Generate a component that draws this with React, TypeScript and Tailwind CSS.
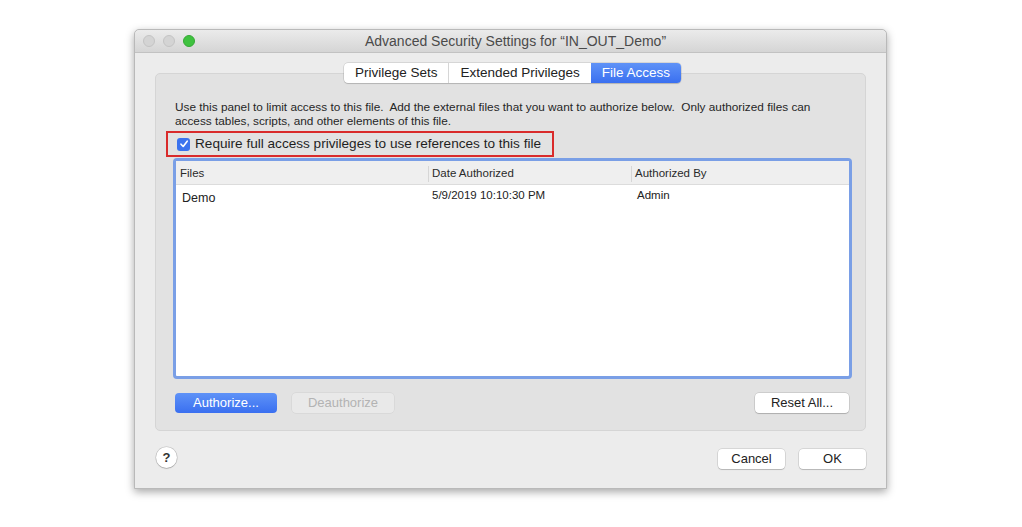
import React from 'react';

const font = { fontFamily: '"Liberation Sans", Arial, sans-serif' };

const Tab = ({ label, active = false, last = false }: { label: string; active?: boolean; last?: boolean }) => (
  <div
    className={`h-[20px] px-[11px] flex items-center text-[13.5px] leading-none ${
      active
        ? 'bg-gradient-to-b from-[#5f92f7] to-[#3a6ff0] text-white rounded-r-[4px]'
        : 'text-[#222] ' + (last ? '' : 'border-r border-[#d6d6d6]')
    }`}
  >
    {label}
  </div>
);

const MacButton = ({ label, className = '' }: { label: string; className?: string }) => (
  <button
    className={`h-[20px] rounded-[4px] bg-white text-[13px] text-[#222] shadow-[0_0_0_0.5px_rgba(0,0,0,0.18),0_1px_1px_rgba(0,0,0,0.15)] ${className}`}
  >
    {label}
  </button>
);

export default function App() {
  return (
    <div className="w-[1022px] h-[527px] bg-white overflow-hidden pt-[29px] pl-[134px]" style={font}>
      {/* Window */}
      <div className="w-[753px] h-[460px] flex flex-col bg-[#ececec] rounded-t-[5px] border border-[#b9b9b9] shadow-[0_3px_8px_rgba(0,0,0,0.35)]">
        {/* Title bar */}
        <div className="h-[23px] relative flex items-center justify-center bg-gradient-to-b from-[#ebebeb] to-[#d5d5d5] border-b border-[#c2c2c2] rounded-t-[5px]">
          <div className="absolute left-[8px] top-[5px] flex gap-[8px]">
            <span className="w-[12px] h-[12px] rounded-full bg-[#d4d4d4] border border-[#c4c4c4]" />
            <span className="w-[12px] h-[12px] rounded-full bg-[#d4d4d4] border border-[#c4c4c4]" />
            <span className="w-[12px] h-[12px] rounded-full bg-[#3fc23f] border border-[#35a935]" />
          </div>
          <span className="text-[14px] text-[#4a4a4a] pl-[10px]">Advanced Security Settings for “IN_OUT_Demo”</span>
        </div>

        {/* Body */}
        <div className="flex-1 flex flex-col px-[20px] pt-[10px]">
          {/* Tabs */}
          <div className="flex justify-center relative z-10 -mb-[10px] pl-[4px]">
            <div className="flex bg-white rounded-[4px] shadow-[0_0_0_0.5px_rgba(0,0,0,0.18),0_1px_1px_rgba(0,0,0,0.12)]">
              <Tab label="Privilege Sets" />
              <Tab label="Extended Privileges" last />
              <Tab label="File Access" active />
            </div>
          </div>

          {/* Panel */}
          <div className="h-[358px] bg-[#e2e2e2] border border-[#d5d5d5] rounded-[5px] flex flex-col pt-[26px] px-[10px]">
            <p className="text-[11.8px] leading-[14px] text-[#262626] pl-[9px] w-[680px]">
              Use this panel to limit access to this file.&nbsp; Add the external files that you want to authorize below.&nbsp; Only authorized files can access tables, scripts, and other elements of this file.
            </p>

            <div className="mt-[3px] w-[388px] h-[26px] border-2 border-[#d92b2b] flex items-center gap-[5px] pl-[9px]">
              <span className="w-[13px] h-[13px] rounded-[3px] bg-[#3b73ee] flex items-center justify-center">
                <svg width="10" height="10" viewBox="0 0 10 10">
                  <path d="M2 5.2 L4.2 7.5 L8.2 2.2" stroke="white" strokeWidth="1.6" fill="none" strokeLinecap="round" strokeLinejoin="round" />
                </svg>
              </span>
              <span className="text-[13.6px] text-[#1f1f1f]">Require full access privileges to use references to this file</span>
            </div>

            {/* Table */}
            <div className="mt-[1px] ml-[7px] w-[679px] h-[221px] rounded-[4px] border-[3px] border-[#7a9fe6] bg-white flex flex-col">
              <div className="h-[24px] flex items-center bg-[#efefef] border-b border-[#dcdcdc] text-[11.5px] text-[#2a2a2a] pt-[2px]">
                <div className="w-[253px] pl-[4px] border-r border-[#d6d6d6] h-[16px] flex items-center">Files</div>
                <div className="w-[203px] pl-[3px] border-r border-[#d6d6d6] h-[16px] flex items-center">Date Authorized</div>
                <div className="flex-1 pl-[3px] h-[16px] flex items-center">Authorized By</div>
              </div>
              <div className="flex text-[11.5px] text-[#222] pt-[2px]">
                <div className="w-[253px] pl-[6px] pt-[2px] text-[12.5px]">Demo</div>
                <div className="w-[203px] pl-[3px]">5/9/2019 10:10:30 PM</div>
                <div className="flex-1 pl-[5px]">Admin</div>
              </div>
            </div>

            {/* Table buttons */}
            <div className="mt-[14px] flex items-center pl-[9px] pr-[6px]">
              <button className="w-[102px] h-[20px] rounded-[4px] bg-gradient-to-b from-[#5f92f7] to-[#3a6ff0] text-white text-[13px]">
                Authorize...
              </button>
              <button className="ml-[15px] w-[102px] h-[20px] rounded-[4px] bg-[#e9e9e9] text-[#b3b3b3] text-[13px] shadow-[0_0_0_0.5px_rgba(0,0,0,0.08)]">
                Deauthorize
              </button>
              <div className="flex-1" />
              <MacButton label="Reset All..." className="w-[94px]" />
            </div>
          </div>

          {/* Footer */}
          <div className="mt-[15px] flex items-center">
            <div className="ml-[1px] w-[21px] h-[21px] rounded-full bg-white shadow-[0_0_0_0.5px_rgba(0,0,0,0.2),0_1px_1px_rgba(0,0,0,0.15)] flex items-center justify-center text-[13px] font-bold text-[#333]">
              ?
            </div>
            <div className="flex-1" />
            <MacButton label="Cancel" className="w-[67px] mt-[3px]" />
            <MacButton label="OK" className="w-[67px] ml-[14px] mt-[3px]" />
          </div>
        </div>
      </div>
    </div>
  );
}
